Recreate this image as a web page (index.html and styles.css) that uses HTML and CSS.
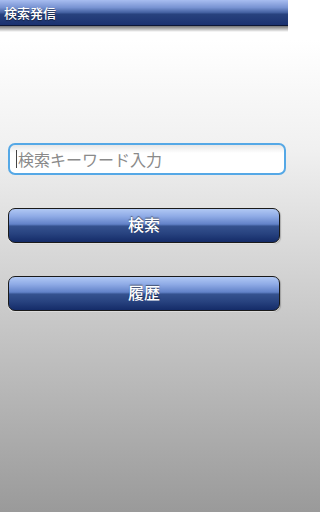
FILE: index.html
```html
<!DOCTYPE html>
<html lang="ja">
<head>
<meta charset="utf-8">
<link rel="stylesheet" href="styles.css">
</head>
<body>
<div class="titlebar"><span class="title">検索発信</span></div>
<div class="shadow"></div>
<main class="content">
  <div class="field"><span class="caret"></span><span class="placeholder">検索キーワード入力</span></div>
  <button class="btn">検索</button>
  <button class="btn">履歴</button>
</main>
</body>
</html>
```
FILE: styles.css
```css
html {
  margin: 0;
  padding: 0;
  height: 100%;
  background: linear-gradient(to bottom, #ffffff 0px, #ffffff 40px, #f0f0f0 150px, #9a9a9a 512px);
}
body {
  margin: 0;
  padding: 0;
  width: 288px;
  height: 512px;
  overflow: hidden;
  font-family: "Noto Sans CJK JP", "Noto Sans", sans-serif;
  background: linear-gradient(to bottom, #ffffff 0px, #ffffff 40px, #f0f0f0 150px, #9a9a9a 512px);
}
.titlebar {
  height: 25px;
  background: linear-gradient(to bottom, #a8bdf0 0%, #7893d2 30%, #3f5c9c 52%, #28427e 56%, #1b3270 100%);
  border-bottom: 1px solid #0c1636;
  display: flex;
  align-items: center;
  padding-left: 4px;
}
.title {
  color: #ffffff;
  font-size: 13px;
  font-weight: 500;
  line-height: 1;
  text-shadow: 0 1px 1px rgba(0,0,0,0.5);
}
.shadow {
  height: 6px;
  background: linear-gradient(to bottom, rgba(0,0,0,0.55), rgba(0,0,0,0));
}
.content {
  display: flex;
  flex-direction: column;
  padding: 111px 8px 0 8px;
  gap: 33px;
}
.field {
  height: 28px;
  border: 2px solid #55a8e6;
  border-radius: 7px;
  background: linear-gradient(to bottom, #e6e6e6 0px, #ffffff 8px, #ffffff 100%);
  display: flex;
  align-items: center;
  padding-left: 6px;
  width: 268px;
}
.caret {
  width: 1px;
  height: 18px;
  background: #444;
  margin-right: 1px;
}
.placeholder {
  color: #8a8a8a;
  font-size: 16px;
  line-height: 1;
}
.btn {
  display: block;
  width: 272px;
  height: 35px;
  margin: 0;
  padding: 0 0 3px 0;
  border: 1px solid #1a1a1a;
  border-radius: 7px;
  background: linear-gradient(to bottom, #b0c8f4 0%, #8fabe6 22%, #6282c8 46%, #35528f 52%, #27427f 75%, #142b68 100%);
  box-shadow: 0 1px 1px rgba(255,255,255,0.7), 1px 1px 1px rgba(0,0,0,0.25);
  color: #ffffff;
  font-family: "Noto Sans CJK JP", "Noto Sans", sans-serif;
  font-size: 16px;
  font-weight: 500;
  line-height: 1;
  text-shadow: 0 -1px 1px rgba(0,0,0,0.5);
}
```
